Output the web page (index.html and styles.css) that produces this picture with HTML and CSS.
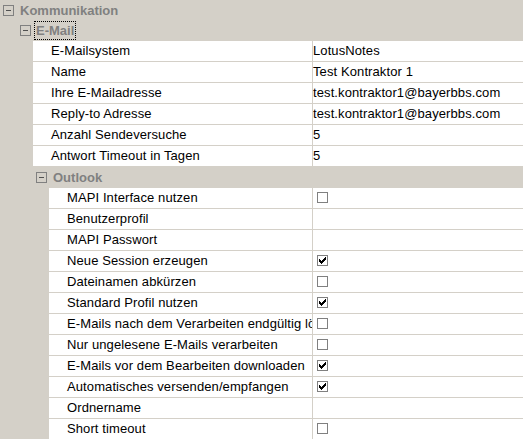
FILE: index.html
```html
<html>
<head>
<meta charset="utf-8">
<title>Kommunikation</title>
<link rel="stylesheet" href="styles.css">
</head>
<body>
<div class="tree">

  <div class="head lvl0 first">
    <span class="toggle"></span>
    <span class="caption">Kommunikation</span>
  </div>

  <div class="head lvl1">
    <span class="toggle"></span>
    <span class="caption focus">E-Mail</span>
  </div>

  <div class="group g1">
    <div class="row"><div class="label">E-Mailsystem</div><div class="value">LotusNotes</div></div>
    <div class="row"><div class="label">Name</div><div class="value">Test Kontraktor 1</div></div>
    <div class="row"><div class="label">Ihre E-Mailadresse</div><div class="value">test.kontraktor1@bayerbbs.com</div></div>
    <div class="row"><div class="label">Reply-to Adresse</div><div class="value">test.kontraktor1@bayerbbs.com</div></div>
    <div class="row"><div class="label">Anzahl Sendeversuche</div><div class="value">5</div></div>
    <div class="row"><div class="label">Antwort Timeout in Tagen</div><div class="value">5</div></div>
  </div>

  <div class="head lvl2">
    <span class="toggle"></span>
    <span class="caption">Outlook</span>
  </div>

  <div class="group g2">
    <div class="row"><div class="label">MAPI Interface nutzen</div><div class="value"><span class="check"></span></div></div>
    <div class="row"><div class="label">Benutzerprofil</div><div class="value"></div></div>
    <div class="row"><div class="label">MAPI Passwort</div><div class="value"></div></div>
    <div class="row"><div class="label">Neue Session erzeugen</div><div class="value"><span class="check on"></span></div></div>
    <div class="row"><div class="label">Dateinamen abkürzen</div><div class="value"><span class="check"></span></div></div>
    <div class="row"><div class="label">Standard Profil nutzen</div><div class="value"><span class="check on"></span></div></div>
    <div class="row"><div class="label">E-Mails nach dem Verarbeiten endgültig löschen</div><div class="value"><span class="check"></span></div></div>
    <div class="row"><div class="label">Nur ungelesene E-Mails verarbeiten</div><div class="value"><span class="check"></span></div></div>
    <div class="row"><div class="label">E-Mails vor dem Bearbeiten downloaden</div><div class="value"><span class="check on"></span></div></div>
    <div class="row"><div class="label">Automatisches versenden/empfangen</div><div class="value"><span class="check on"></span></div></div>
    <div class="row"><div class="label">Ordnername</div><div class="value"></div></div>
    <div class="row"><div class="label">Short timeout</div><div class="value"><span class="check"></span></div></div>
  </div>

</div>

<script>
// draw the classic check mark into every checked box
var mark = '<svg width="11" height="11" viewBox="0 0 11 11" shape-rendering="crispEdges">' +
  '<rect x="0.5" y="0.5" width="10" height="10" fill="#fff" stroke="#808080"/>' +
  '<path fill="#000" d="M8 2h1v1h-1z M7 3h2v1h-2z M2 4h1v1h-1z M6 4h3v1h-3z M2 5h2v1h-2z M5 5h3v1h-3z M2 6h5v1h-5z M3 7h3v1h-3z M4 8h1v1h-1z"/>' +
  '</svg>';
var empty = '<svg width="11" height="11" viewBox="0 0 11 11" shape-rendering="crispEdges">' +
  '<rect x="0.5" y="0.5" width="10" height="10" fill="#fff" stroke="#808080"/>' +
  '</svg>';
var boxes = document.getElementsByClassName('check');
for (var i = 0; i < boxes.length; i++)
{
    boxes[i].innerHTML = boxes[i].className.indexOf('on') > -1 ? mark : empty;
}
</script>
</body>
</html>
```

FILE: styles.css
```css
body {
    margin: 0;
    background: #d4d0c8;
    font-family: "Liberation Sans", Arial, sans-serif;
    font-size: 13px;
    color: #000;
    overflow: hidden;
}
.tree {
    width: 523px;
}
.head {
    display: flex;
    align-items: center;
    height: 20px;
    border-bottom: 1px solid #d4d0c8;
    color: #808080;
    font-weight: bold;
}
.head.first {
    border-bottom: 0;
}
.lvl0 { padding-left: 3px; }
.lvl1 { padding-left: 20px; }
.lvl2 { padding-left: 36px; }
.toggle {
    position: relative;
    width: 11px;
    height: 11px;
    box-sizing: border-box;
    border: 1px solid #808080;
    margin-right: 6px;
    flex: none;
}
.toggle:after {
    content: "";
    position: absolute;
    left: 2px;
    top: 4px;
    width: 5px;
    height: 1px;
    background: #505050;
}
.lvl1 .toggle {
    margin-right: 3px;
}
.focus {
    align-self: flex-end;
    box-sizing: border-box;
    height: 19px;
    line-height: 17px;
    padding: 0 1px;
    border: 1px dotted #000;
}
.group.g1 { padding-left: 33px; }
.group.g2 { padding-left: 49px; }
.row {
    display: flex;
    height: 20px;
    line-height: 20px;
    background: #fff;
    border-bottom: 1px solid #d4d0c8;
    letter-spacing: 0.1px;
}
.label {
    flex: 1;
    padding-left: 18px;
    white-space: nowrap;
    overflow: hidden;
}
.value {
    width: 211px;
    box-sizing: border-box;
    border-left: 1px solid #d4d0c8;
    padding-left: 0;
    white-space: nowrap;
    overflow: hidden;
    flex: none;
}
.check {
    display: block;
    width: 11px;
    height: 11px;
    margin: 4px 0 0 4px;
}
.check svg {
    display: block;
}
```
